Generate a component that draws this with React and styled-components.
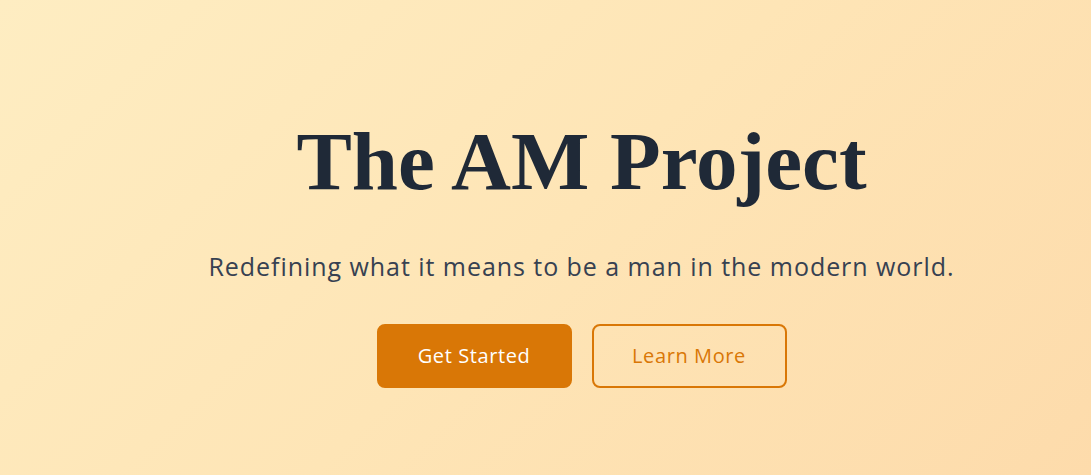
import React from 'react';
import styled, { createGlobalStyle } from 'styled-components';

const GlobalStyle = createGlobalStyle`
  * {
    box-sizing: border-box;
  }

  body {
    margin: 0;
    font-family: "Open Sans", "Liberation Sans", sans-serif;
  }
`;

const App = () => {
  return (
    <>
      <GlobalStyle />
      <Hero>
        <Title>The AM Project</Title>
        <Subtitle>Redefining what it means to be a man in the modern world.</Subtitle>
        <Actions>
          <Button $variant="solid">Get Started</Button>
          <Button $variant="outline">Learn More</Button>
        </Actions>
      </Hero>
    </>
  );
};

export default App;

const Hero = styled.section`
  min-height: 100vh;
  display: flex;
  flex-direction: column;
  align-items: center;
  padding: 120px 0 0 72px;
  background: linear-gradient(135deg, #feedc2 0%, #fee5b6 50%, #fddbab 100%);
`;

const Title = styled.h1`
  margin: 0;
  font-family: "Liberation Serif", "Times New Roman", serif;
  font-weight: 700;
  font-size: 83px;
  line-height: 1;
  color: #1f2937;
`;

const Subtitle = styled.p`
  margin: 47px 0 0 0;
  font-size: 25px;
  line-height: 32px;
  color: #374151;
  letter-spacing: 0.95px;
`;

const Actions = styled.div`
  display: flex;
  gap: 20px;
  margin-top: 42px;
`;

const Button = styled.button`
  font-family: "Open Sans", "Liberation Sans", sans-serif;
  font-size: 20px;
  line-height: 28px;
  letter-spacing: 0.6px;
  padding: 16px 38px;
  border-radius: 8px;
  border: 2px solid #d97706;
  cursor: pointer;
  background: ${(props) => (props.$variant === 'solid' ? '#d97706' : 'transparent')};
  color: ${(props) => (props.$variant === 'solid' ? '#ffffff' : '#d97706')};
  min-width: 195px;
`;
